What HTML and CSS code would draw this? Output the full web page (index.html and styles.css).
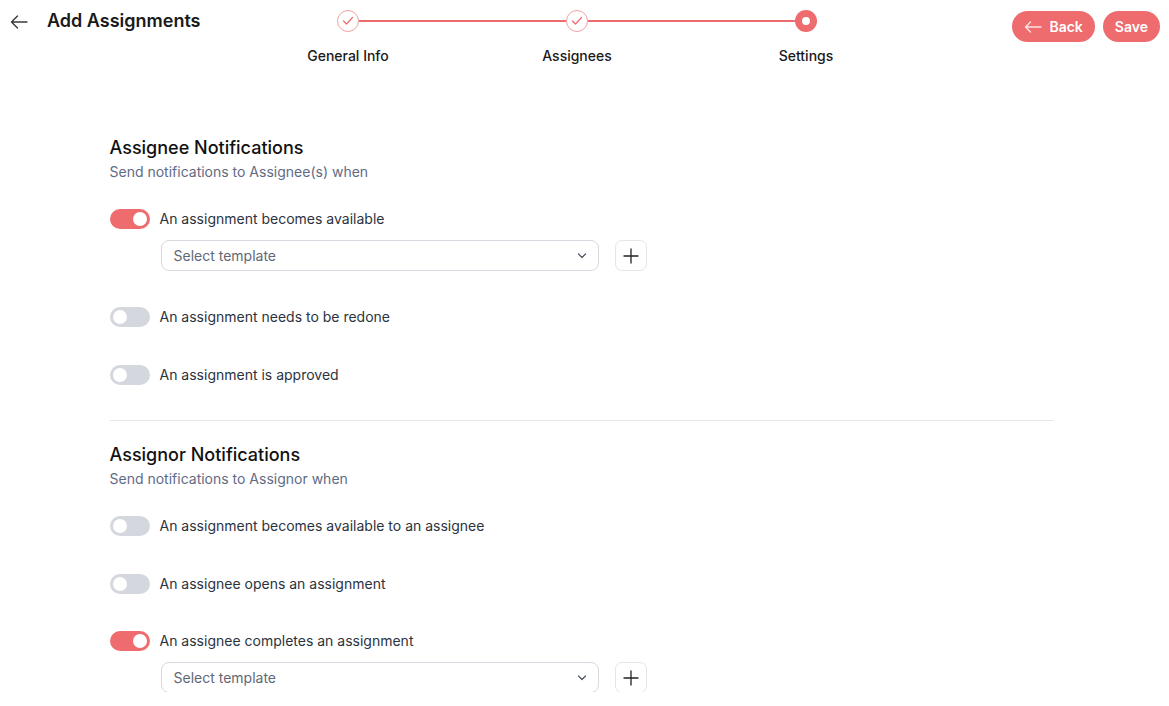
FILE: index.html
```html
<!DOCTYPE html>
<html lang="en">
<head>
    <meta charset="UTF-8">
    <meta name="viewport" content="width=device-width, initial-scale=1.0">
    <title>Add Assignments</title>
    <link rel="stylesheet" href="styles.css">
</head>
<body>
    <header class="top-bar">
        <div class="top-left">
            <svg class="back-arrow" width="18" height="14" viewBox="0 0 18 14" fill="none" stroke="#3a3a3a" stroke-width="1.4" stroke-linecap="round" stroke-linejoin="round">
                <path d="M17 7H1.5M7.5 1L1.5 7l6 6"/>
            </svg>
            <h1 class="page-title">Add Assignments</h1>
        </div>

        <!-- stepper -->
        <div class="stepper">
            <div class="step">
                <span class="step-dot done">
                    <svg width="12" height="10" viewBox="0 0 12 10" fill="none" stroke="#ee6b6e" stroke-width="1.2" stroke-linecap="round" stroke-linejoin="round"><path d="M1.5 5l3 3 6-6.5"/></svg>
                </span>
                <span class="step-label">General Info</span>
            </div>
            <div class="step-line"></div>
            <div class="step">
                <span class="step-dot done">
                    <svg width="12" height="10" viewBox="0 0 12 10" fill="none" stroke="#ee6b6e" stroke-width="1.2" stroke-linecap="round" stroke-linejoin="round"><path d="M1.5 5l3 3 6-6.5"/></svg>
                </span>
                <span class="step-label">Assignees</span>
            </div>
            <div class="step-line"></div>
            <div class="step">
                <span class="step-dot current"></span>
                <span class="step-label">Settings</span>
            </div>
        </div>

        <div class="top-actions">
            <button class="btn">
                <svg width="18" height="12" viewBox="0 0 18 12" fill="none" stroke="#fde3e3" stroke-width="1.4" stroke-linecap="round" stroke-linejoin="round"><path d="M17 6H1.5M6.5 1L1.5 6l5 5"/></svg>
                Back
            </button>
            <button class="btn">Save</button>
        </div>
    </header>

    <main class="settings">
        <section class="group">
            <h2 class="group-title">Assignee Notifications</h2>
            <p class="group-sub">Send notifications to Assignee(s) when</p>
            <div class="options">
                <div class="option">
                    <label class="option-row"><span class="toggle on"></span>An assignment becomes available</label>
                    <div class="template-row">
                        <div class="select">Select template
                            <svg width="10" height="6" viewBox="0 0 10 6" fill="none" stroke="#4b5563" stroke-width="1.2" stroke-linecap="round" stroke-linejoin="round"><path d="M1.5 1l3.5 3.5L8.5 1"/></svg>
                        </div>
                        <button class="add-btn"><svg width="16" height="16" viewBox="0 0 16 16" stroke="#222" stroke-width="1.3" stroke-linecap="round"><path d="M8 1v14M1 8h14"/></svg></button>
                    </div>
                </div>
                <div class="option">
                    <label class="option-row"><span class="toggle"></span>An assignment needs to be redone</label>
                </div>
                <div class="option">
                    <label class="option-row"><span class="toggle"></span>An assignment is approved</label>
                </div>
            </div>
        </section>

        <hr class="divider">

        <section class="group">
            <h2 class="group-title">Assignor Notifications</h2>
            <p class="group-sub">Send notifications to Assignor when</p>
            <div class="options">
                <div class="option">
                    <label class="option-row"><span class="toggle"></span>An assignment becomes available to an assignee</label>
                </div>
                <div class="option">
                    <label class="option-row"><span class="toggle"></span>An assignee opens an assignment</label>
                </div>
                <div class="option">
                    <label class="option-row"><span class="toggle on"></span>An assignee completes an assignment</label>
                    <div class="template-row">
                        <div class="select">Select template
                            <svg width="10" height="6" viewBox="0 0 10 6" fill="none" stroke="#4b5563" stroke-width="1.2" stroke-linecap="round" stroke-linejoin="round"><path d="M1.5 1l3.5 3.5L8.5 1"/></svg>
                        </div>
                        <button class="add-btn"><svg width="16" height="16" viewBox="0 0 16 16" stroke="#222" stroke-width="1.3" stroke-linecap="round"><path d="M8 1v14M1 8h14"/></svg></button>
                    </div>
                </div>
            </div>
        </section>
    </main>
</body>
</html>
```

FILE: styles.css
```css
*{
    margin: 0;
    padding: 0;
    box-sizing: border-box;
}
body{
    font-family: Inter, "Liberation Sans", sans-serif;
    color: #1f2937;
    background: #fff;
}
/* top bar */
.top-bar{
    display: flex;
    align-items: flex-start;
    height: 66px;
}
.top-left{
    display: flex;
    align-items: center;
    width: 288px;
    padding: 10px 0 0 10px;
    height: 32px;
}
.back-arrow{
    margin-top: 1px;
}
.page-title{
    font-size: 18px;
    font-weight: 600;
    color: #1a1a1a;
    margin-left: 19px;
    line-height: 22px;
}
.stepper{
    display: flex;
    align-items: flex-start;
    padding-top: 10px;
}
.step{
    width: 120px;
    display: flex;
    flex-direction: column;
    align-items: center;
    position: relative;
    z-index: 1;
}
.step-dot{
    width: 22px;
    height: 22px;
    border-radius: 50%;
    display: flex;
    align-items: center;
    justify-content: center;
}
.step-dot.done{
    background: #fff;
    border: 1px solid #f2a2a4;
}
.step-dot.current{
    background: #ee6b6e;
}
.step-dot.current::after{
    content: "";
    width: 8px;
    height: 8px;
    border-radius: 50%;
    background: #fff;
}
.step-label{
    margin-top: 14px;
    font-size: 14px;
    font-weight: 500;
    line-height: 20px;
    color: #1a1a1a;
}
.step-line{
    flex: none;
    width: 207px;
    height: 2px;
    margin: 10px -49px 0;
    background: #ee6b6e;
}
.top-actions{
    margin-left: auto;
    display: flex;
    gap: 8px;
    padding: 11px 9px 0 0;
}
.btn{
    display: flex;
    align-items: center;
    gap: 7px;
    height: 31px;
    padding: 0 12px;
    border: none;
    border-radius: 16px;
    background: #ee6b6e;
    color: #fff;
    font-family: inherit;
    font-size: 14px;
    font-weight: 600;
}
/* content */
.settings{
    width: 944px;
    margin: 0 auto;
    padding-top: 68px;
    position: relative;
    left: -3px;
}
.group-title{
    font-size: 18px;
    font-weight: 500;
    line-height: 28px;
    color: #111;
}
.group-sub{
    font-size: 14px;
    line-height: 20px;
    color: #5f6b85;
}
.options{
    display: flex;
    flex-direction: column;
    gap: 37.5px;
    margin-top: 27px;
}
.option-row{
    display: flex;
    align-items: center;
    gap: 10px;
    font-size: 14px;
    line-height: 20px;
    color: #2b3340;
}
.toggle{
    width: 40px;
    height: 20px;
    border-radius: 10px;
    background: #d4d7dd;
    display: flex;
    align-items: center;
    padding: 0 3px;
}
.toggle::after{
    content: "";
    width: 14px;
    height: 14px;
    border-radius: 50%;
    background: #fff;
}
.toggle.on{
    background: #ee6b6e;
    justify-content: flex-end;
}
.template-row{
    display: flex;
    gap: 16px;
    margin: 11px 0 -1.5px 51px;
}
.select{
    width: 438px;
    height: 31px;
    border: 1px solid #d5d9e0;
    border-radius: 8px;
    display: flex;
    align-items: center;
    justify-content: space-between;
    padding: 0 11px 0 12px;
    font-size: 14px;
    color: #5f6878;
}
.add-btn{
    width: 32px;
    height: 31px;
    border: 1px solid #e3e6eb;
    border-radius: 7px;
    background: #fff;
    display: flex;
    align-items: center;
    justify-content: center;
}
.divider{
    border: none;
    border-top: 1px solid #e5e7eb;
    margin: 35px 0 20.5px;
}
```
